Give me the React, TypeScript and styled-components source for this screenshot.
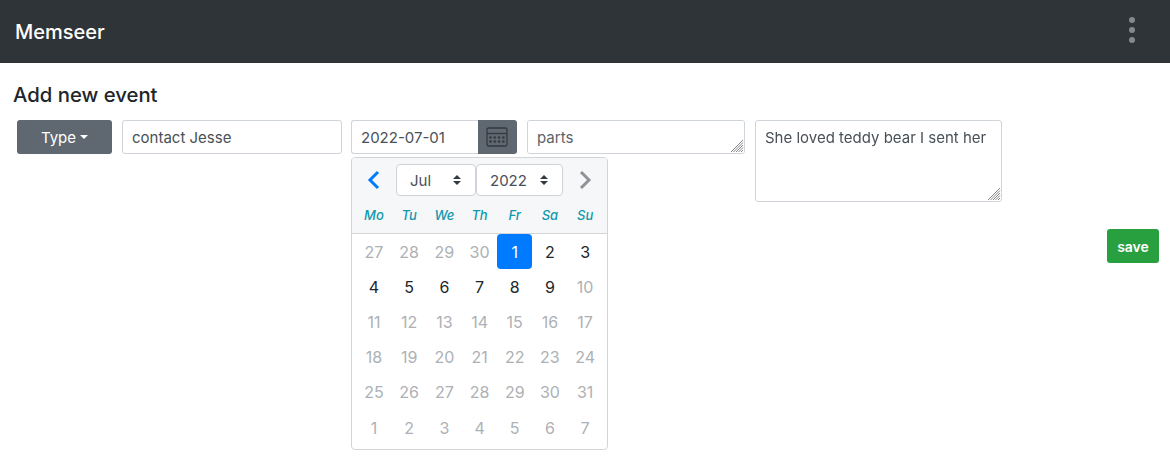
import React from "react";
import styled, { createGlobalStyle } from "styled-components";

const FONT = `Inter, "Liberation Sans", Arial, sans-serif`;

const SELECT_ARROWS = `url("data:image/svg+xml,%3Csvg xmlns='http://www.w3.org/2000/svg' width='8' height='10' viewBox='0 0 8 10'%3E%3Cpath fill='%23343a40' d='M4 0 0 4h8zM4 10 0 6h8z'/%3E%3C/svg%3E")`;

const RESIZE_GRIP = `url("data:image/svg+xml,%3Csvg xmlns='http://www.w3.org/2000/svg' width='14' height='14' viewBox='0 0 14 14'%3E%3Cpath stroke='%23777' stroke-width='0.9' d='M1 13 13 1M3.5 13 13 3.5M6 13l7-7M8.5 13l4.5-4.5M11 13l2-2'/%3E%3C/svg%3E")`;

const GlobalStyle = createGlobalStyle`
  html, body {
    margin: 0;
    padding: 0;
    background: #fff;
    font-family: ${FONT};
    color: #212529;
  }
  * {
    box-sizing: border-box;
  }
`;

const Page = styled.div`
  min-height: 100vh;
`;

const Navbar = styled.nav`
  display: flex;
  align-items: center;
  justify-content: space-between;
  height: 63px;
  padding: 0 35px 0 15px;
  background-color: #2e3438;
`;

const Brand = styled.span`
  font-size: 20px;
  font-weight: 500;
  color: #fff;
`;

const MenuDots = styled.div`
  display: flex;
  flex-direction: column;
  gap: 4px;
  margin-bottom: 3px;
`;

const Dot = styled.span`
  width: 6px;
  height: 6px;
  border-radius: 50%;
  background-color: #85898c;
`;

const Content = styled.main`
  padding: 20px 11px 0 13px;
`;

const Heading = styled.h5`
  margin: 0 0 13px;
  font-size: 20.3px;
  line-height: 24px;
  font-weight: 500;
  color: #212529;
`;

const FormRow = styled.div`
  display: flex;
  align-items: flex-start;
  gap: 10px;
  padding-left: 4px;
`;

const TypeButton = styled.button`
  display: flex;
  align-items: center;
  justify-content: center;
  gap: 4px;
  width: 95px;
  height: 34px;
  border: 0;
  border-radius: 3px;
  background-color: #5f6770;
  color: #fff;
  font-family: ${FONT};
  font-size: 15px;
`;

const Caret = styled.span`
  border-top: 4px solid #fff;
  border-left: 4px solid transparent;
  border-right: 4px solid transparent;
`;

const TextInput = styled.input<{ $width: number }>`
  width: ${({ $width }) => $width}px;
  height: 34px;
  padding: 0 9px;
  border: 1px solid #ced4da;
  border-radius: 3px;
  color: #495057;
  font-family: ${FONT};
  font-size: 15px;
`;

const DateGroup = styled.div`
  position: relative;
  display: flex;
  width: 166px;
  height: 34px;
  margin-left: -1px;
`;

const DateInput = styled.input`
  width: 127px;
  height: 34px;
  padding: 0 9px;
  border: 1px solid #ced4da;
  border-right: 0;
  border-radius: 3px 0 0 3px;
  color: #495057;
  font-family: ${FONT};
  font-size: 15px;
`;

const CalendarButton = styled.button`
  display: flex;
  align-items: center;
  justify-content: center;
  width: 39px;
  height: 34px;
  padding: 0 2px 0 0;
  border: 0;
  border-radius: 0 3px 3px 0;
  background-color: #5f6770;
`;

const Popup = styled.div`
  position: absolute;
  top: 37px;
  left: 0;
  width: 257px;
  height: 293px;
  border: 1px solid #d2d5d8;
  border-radius: 4px;
  background-color: #fff;
  overflow: hidden;
`;

const PopupHeader = styled.div`
  height: 76px;
  border-bottom: 1px solid #d2d5d8;
  background-color: #f6f7f8;
`;

const MonthNav = styled.div`
  display: flex;
  align-items: center;
  height: 38px;
  padding-top: 6px;
`;

const NavArrow = styled.button`
  display: flex;
  align-items: center;
  justify-content: center;
  width: 44px;
  height: 32px;
  padding: 0;
  border: 0;
  background: none;
`;

const MonthSelect = styled.select<{ $width: number }>`
  appearance: none;
  width: ${({ $width }) => $width}px;
  height: 32px;
  padding: 0 0 0 13px;
  border: 1px solid #ced4da;
  border-radius: 4px;
  background: #fff ${SELECT_ARROWS} no-repeat right 14px center;
  color: #495057;
  font-family: ${FONT};
  font-size: 15px;
`;

const DaysGrid = styled.div`
  display: grid;
  grid-template-columns: repeat(7, 35.2px);
  padding-left: 4.4px;
`;

const WeekdayRow = styled(DaysGrid)`
  height: 37px;
  align-items: center;
`;

const Weekday = styled.span`
  text-align: center;
  font-size: 13px;
  font-style: italic;
  font-weight: 500;
  color: #1098ad;
`;

const Day = styled.span<{ $muted?: boolean; $selected?: boolean }>`
  display: flex;
  align-items: center;
  justify-content: center;
  height: 35.2px;
  border-radius: 4px;
  font-size: 16px;
  color: ${({ $muted, $selected }) =>
    $selected ? "#fff" : $muted ? "#adb1b5" : "#212529"};
  background-color: ${({ $selected }) => ($selected ? "#007bff" : "transparent")};
`;

const NoteArea = styled.textarea<{ $width: number; $height: number; $soft?: boolean }>`
  display: block;
  width: ${({ $width }) => $width}px;
  height: ${({ $height }) => $height}px;
  padding: 7px 9px;
  border: 1px solid #ced4da;
  border-radius: 3px;
  color: ${({ $soft }) => ($soft ? "#5c636a" : "#495057")};
  font-family: ${FONT};
  font-size: 15px;
  line-height: 20px;

  &::-webkit-resizer {
    background: ${RESIZE_GRIP} no-repeat right bottom;
  }
`;

const Actions = styled.div`
  display: flex;
  justify-content: flex-end;
  margin-top: 27px;
`;

const SaveButton = styled.button`
  width: 52px;
  height: 34px;
  padding: 0;
  border: 0;
  border-radius: 3px;
  background-color: #28a03f;
  color: #fff;
  font-family: ${FONT};
  font-size: 14px;
  font-weight: 600;
`;

const WEEKDAYS = ["Mo", "Tu", "We", "Th", "Fr", "Sa", "Su"];

const DAYS = [
  27, 28, 29, 30, 1, 2, 3, 4, 5, 6, 7, 8, 9, 10, 11, 12, 13, 14, 15, 16, 17, 18,
  19, 20, 21, 22, 23, 24, 25, 26, 27, 28, 29, 30, 31, 1, 2, 3, 4, 5, 6, 7,
];

// only 1..9 of July are drawn in the normal colour
const isMuted = (index: number) => index < 4 || index > 12;

const CalendarIcon = () => (
  <svg width="22" height="20" viewBox="0 0 22 20" fill="none">
    <rect x="1" y="1" width="20" height="18" rx="1.5" stroke="#343a40" strokeWidth="1.3" />
    <path d="M1 6.5h20" stroke="#343a40" strokeWidth="1.3" />
    {[10.5, 14.5].map((y) =>
      [4.5, 8.8, 13.1, 17.4].map((x) => (
        <circle key={`${x}-${y}`} cx={x} cy={y} r="1.3" fill="#343a40" />
      ))
    )}
  </svg>
);

const Chevron = ({ dir, color }: { dir: "left" | "right"; color: string }) => (
  <svg width="14" height="20" viewBox="0 0 14 20" fill="none">
    <path
      d={dir === "left" ? "M11 2 3 10l8 8" : "M3 2l8 8-8 8"}
      stroke={color}
      strokeWidth="3"
    />
  </svg>
);

const App = () => {
  return (
    <Page>
      <GlobalStyle />
      <Navbar>
        <Brand>Memseer</Brand>
        <MenuDots>
          <Dot />
          <Dot />
          <Dot />
        </MenuDots>
      </Navbar>
      <Content>
        <Heading>Add new event</Heading>
        <FormRow>
          <TypeButton>
            Type <Caret />
          </TypeButton>
          <TextInput $width={220} defaultValue="contact Jesse" />
          <DateGroup>
            <DateInput defaultValue="2022-07-01" />
            <CalendarButton>
              <CalendarIcon />
            </CalendarButton>
            <Popup>
              <PopupHeader>
                <MonthNav>
                  <NavArrow>
                    <Chevron dir="left" color="#007bff" />
                  </NavArrow>
                  <MonthSelect $width={80} defaultValue="Jul">
                    <option>Jul</option>
                  </MonthSelect>
                  <MonthSelect $width={87} defaultValue="2022">
                    <option>2022</option>
                  </MonthSelect>
                  <NavArrow>
                    <Chevron dir="right" color="#8f9397" />
                  </NavArrow>
                </MonthNav>
                <WeekdayRow>
                  {WEEKDAYS.map((day) => (
                    <Weekday key={day}>{day}</Weekday>
                  ))}
                </WeekdayRow>
              </PopupHeader>
              <DaysGrid>
                {DAYS.map((day, index) => (
                  <Day key={index} $muted={isMuted(index)} $selected={index === 4}>
                    {day}
                  </Day>
                ))}
              </DaysGrid>
            </Popup>
          </DateGroup>
          <NoteArea $width={218} $height={34} $soft defaultValue="parts" />
          <NoteArea $width={247} $height={82} defaultValue="She loved teddy bear I sent her" />
        </FormRow>
        <Actions>
          <SaveButton>save</SaveButton>
        </Actions>
      </Content>
    </Page>
  );
};

export default App;
